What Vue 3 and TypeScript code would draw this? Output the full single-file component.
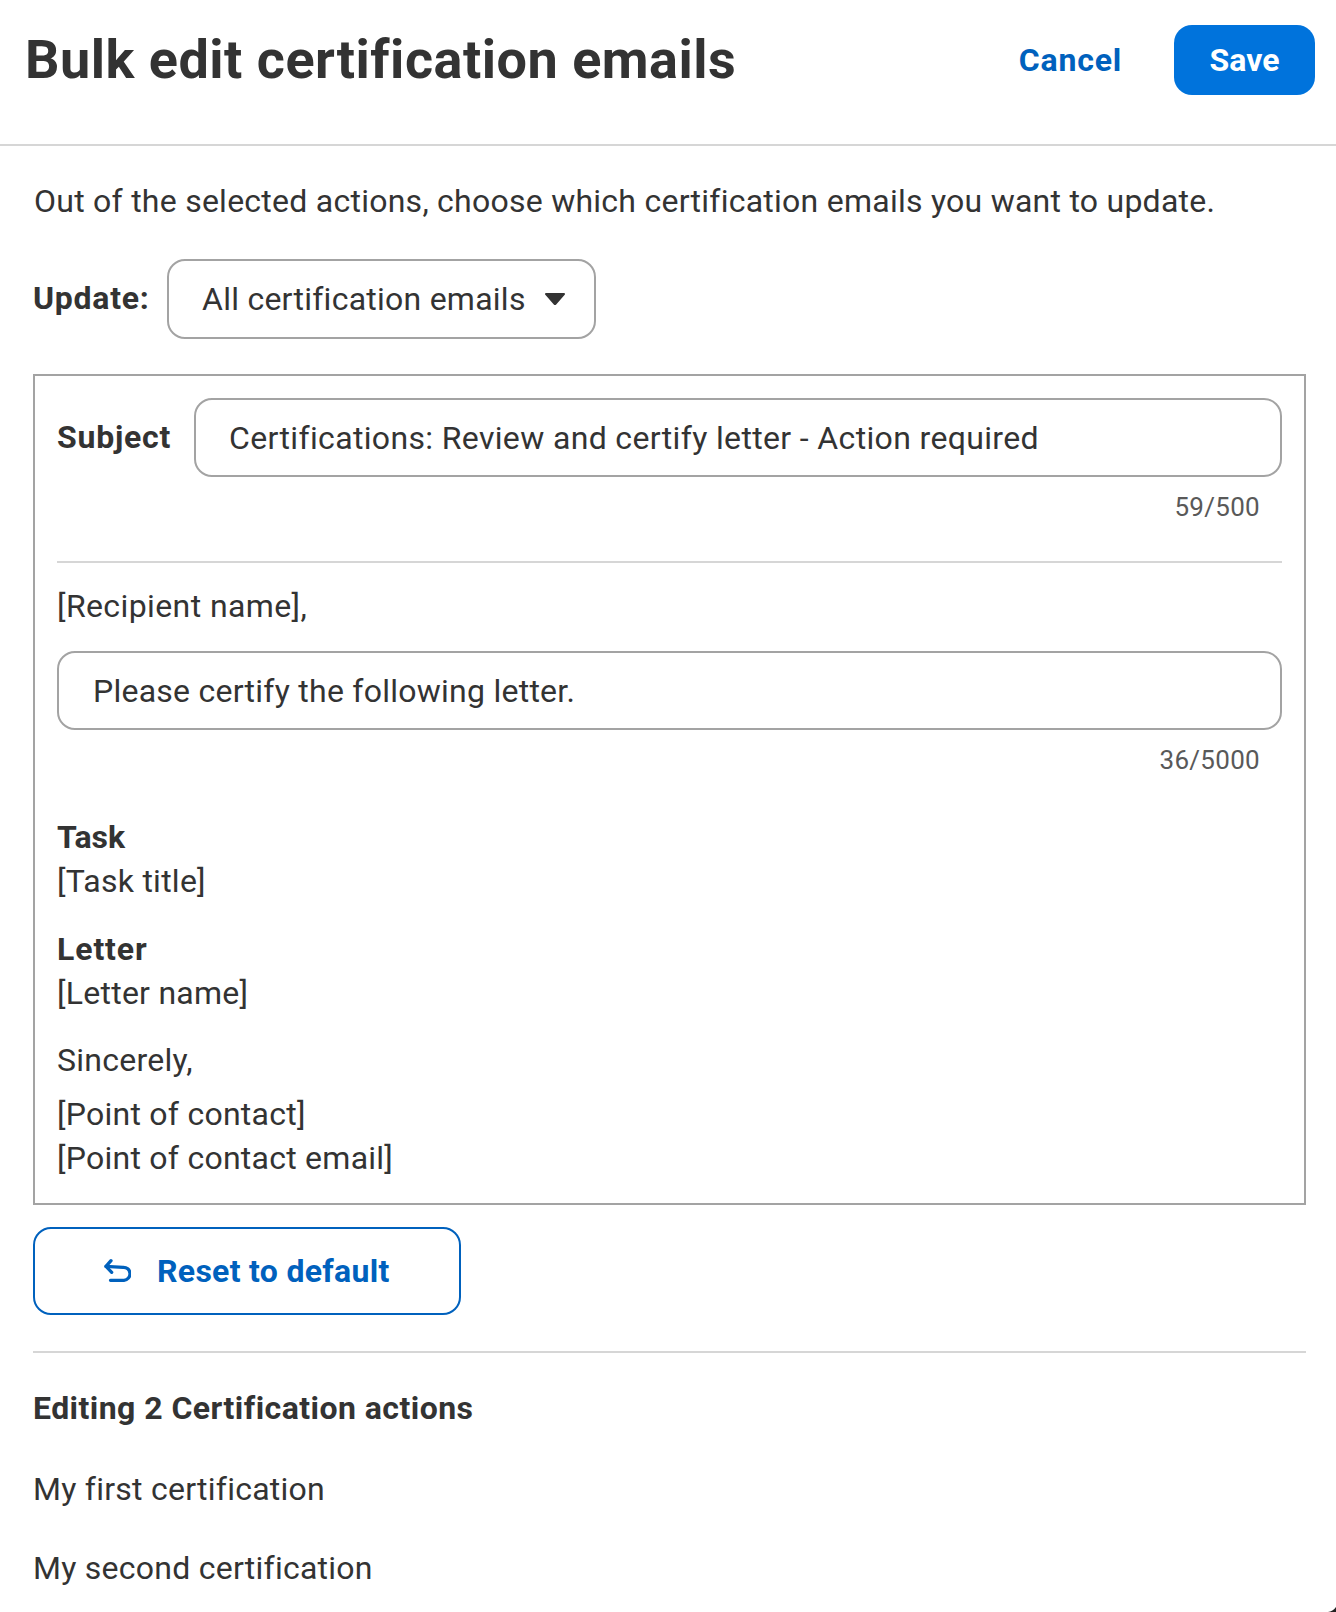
<script setup lang="ts">
const lists: string[] = ['My first certification', 'My second certification']
</script>

<template>
  <div class="page">
    <header class="head">
      <h1>Bulk edit certification emails</h1>
      <div class="actions">
        <a class="cancel">Cancel</a>
        <button class="save">Save</button>
      </div>
    </header>
    <main class="body">
      <p class="intro">Out of the selected actions, choose which certification emails you want to update.</p>
      <div class="update">
        <b class="update-label">Update:</b>
        <div class="select">
          <span>All certification emails</span>
          <svg width="20" height="12" viewBox="0 0 20 12"><path d="M1 0H19C20 0 20.400 1 19.700 1.800L11.200 11.400C10.500 12.200 9.500 12.200 8.800 11.400L.3 1.800C-.4 1 0 0 1 0Z" fill="#333" /></svg>
        </div>
      </div>
      <section class="box">
        <div class="subject">
          <b class="subject-label">Subject</b>
          <div class="input grow">Certifications: Review and certify letter - Action required</div>
        </div>
        <div class="count c1">59/500</div>
        <hr class="rule" />
        <div class="recipient">[Recipient name],</div>
        <div class="input msg">Please certify the following letter.</div>
        <div class="count c2">36/5000</div>
        <div class="field f1"><b class="task">Task</b><div>[Task title]</div></div>
        <div class="field f2"><b class="letter">Letter</b><div>[Letter name]</div></div>
        <div class="sign">Sincerely,</div>
        <div class="contact">[Point of contact]<br />[Point of contact email]</div>
      </section>
      <button class="reset">
        <svg width="28" height="26" viewBox="0 0 28 26" fill="none" stroke="#0061bd" stroke-width="3.300" stroke-linecap="round" stroke-linejoin="round">
          <path d="M8 2.700 3 8.300l5.700 6" />
          <path d="M3 8.300 20 9.300a6.500 6.500 0 0 1 1 13H7.500" />
        </svg>
        <span>Reset to default</span>
      </button>
      <hr class="rule lower" />
      <h2>Editing 2 Certification actions</h2>
      <p v-for="item in lists" :key="item" class="item">{{ item }}</p>
    </main>
    <svg class="corner" width="8" height="5" viewBox="0 0 8 5"><path d="M0 5C3 4.500 6 3 8 0V5Z" fill="#222" /></svg>
  </div>
</template>

<style>
html, body { margin: 0; background: #fff; }
</style>

<style scoped>
.page {
  position: relative;
  width: 1336px;
  height: 1612px;
  overflow: hidden;
  font-family: Roboto, "Noto Sans", sans-serif;
  font-size: 32px;
  line-height: 44px;
  letter-spacing: 0.25px;
  color: #333;
  background: #fff;
}
b, h2 { letter-spacing: 0.45px; }
.head {
  box-sizing: content-box;
  height: 120px;
  border-bottom: 2px solid #d6d6d6;
  display: flex;
  align-items: center;
  justify-content: space-between;
  padding: 0 21px 24px 25px;
}
h1 { margin: 0; font-size: 54px; line-height: 60px; font-weight: 700; letter-spacing: 0.5px; }
.actions { display: flex; align-items: center; gap: 52px; }
.cancel { color: #0061bd; font-weight: 700; letter-spacing: 0.8px; }
.save {
  width: 141px; height: 70px; border: 0; border-radius: 18px;
  background: #0073dc; color: #fff; font: inherit; font-weight: 700; padding: 0; letter-spacing: 0;
}
.body { padding: 33px 30px 0 33px; }
.intro { padding-left: 1px; }
p { margin: 0; }
.update { display: flex; align-items: center; margin-top: 36px; }
.update-label { width: 134px; flex: none; margin-top: -2px; letter-spacing: 0.75px; }
.select {
  box-sizing: border-box; width: 429px; height: 80px;
  border: 2px solid #a3a3a3; border-radius: 18px;
  display: flex; align-items: center; justify-content: space-between;
  padding: 0 29px 0 33px;
}
.box { margin-top: 35px; border: 2px solid #a3a3a3; padding: 22px 22px 23px 22px; }
.subject { display: flex; align-items: center; }
.subject-label { width: 137px; flex: none; margin-top: -2px; letter-spacing: 0.75px; }
.input {
  box-sizing: border-box; height: 79px;
  border: 2px solid #a3a3a3; border-radius: 18px;
  display: flex; align-items: center; padding: 0 34px;
}
.grow { flex: 1; padding: 0 33px; letter-spacing: 0.35px; }
.count { text-align: right; font-size: 26px; color: #595959; padding-right: 22px; letter-spacing: 0.3px; }
.c1 { margin-top: 8px; }
.c2 { margin-top: 8px; }
.rule { margin: 0; border: 0; height: 2px; background: #d6d6d6; }
.box .rule { margin-top: 32px; }
.recipient { margin-top: 21px; letter-spacing: 0.4px; }
.msg { margin-top: 23px; }
.task { letter-spacing: 0; }
.letter { letter-spacing: 0.9px; }
.f1 { margin-top: 33px; }
.f2 { margin-top: 24px; }
.sign { margin-top: 23px; }
.contact { margin-top: 10px; }
.reset {
  box-sizing: border-box; width: 428px; height: 88px; margin-top: 22px;
  border: 2px solid #0061bd; border-radius: 18px; background: #fff; padding: 0 0 0 68px;
  display: flex; align-items: center; gap: 26px;
  color: #0061bd; font: inherit; font-weight: 700; letter-spacing: 0.3px;
}
.lower { margin-top: 36px; }
h2 { margin: 33px 0 0; font: inherit; font-weight: 700; }
.item { margin-top: 37px; }
.item:last-child { margin-top: 35px; }
.corner { position: absolute; right: 0; bottom: 0; }
</style>
